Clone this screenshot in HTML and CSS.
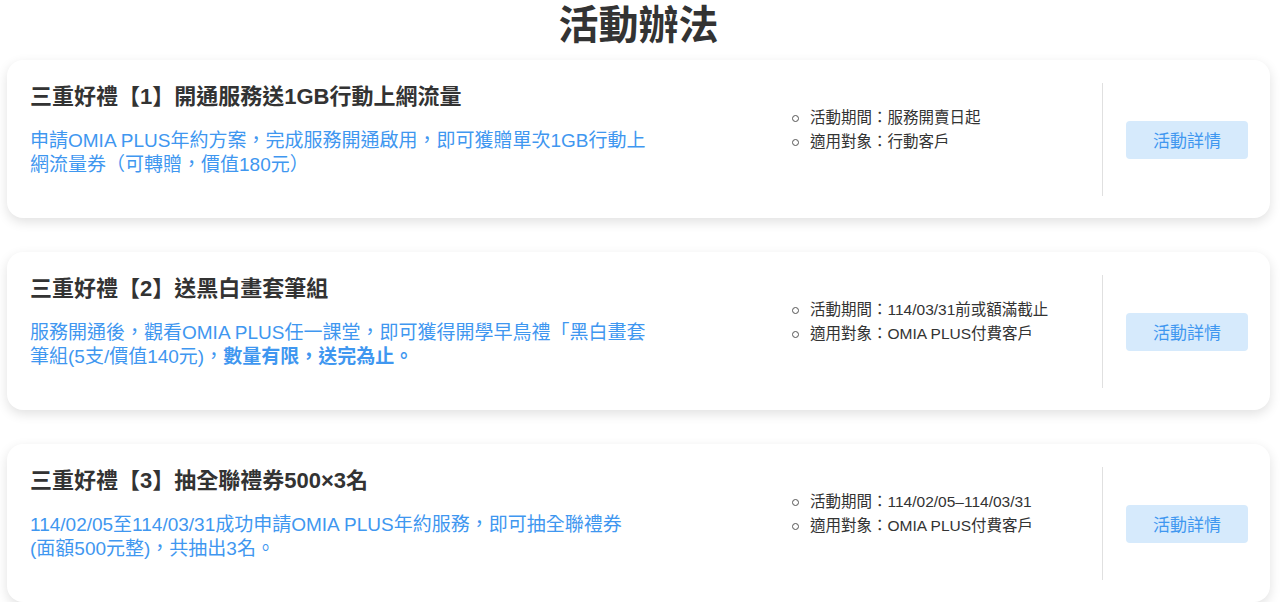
FILE: index.html
```html
<!DOCTYPE html>
<html lang="zh-Hant">
<head>
    <meta charset="UTF-8">
    <title>活動辦法</title>
    <link rel="stylesheet" href="styles.css">
</head>
<body>
    <div class="container">
        <h1>活動辦法</h1>
        <div class="cards">
            <div class="card">
                <div class="info">
                    <h2>三重好禮【1】開通服務送1GB行動上網流量</h2>
                    <p class="desc">申請OMIA PLUS年約方案，完成服務開通啟用，即可獲贈單次1GB行動上<br>網流量券（可轉贈，價值180元）</p>
                </div>
                <ul class="meta">
                    <li>活動期間：服務開賣日起</li>
                    <li>適用對象：行動客戶</li>
                </ul>
                <div class="divider"></div>
                <div class="action">
                    <button>活動詳情</button>
                </div>
            </div>
            <div class="card">
                <div class="info">
                    <h2>三重好禮【2】送黑白畫套筆組</h2>
                    <p class="desc">服務開通後，觀看OMIA PLUS任一課堂，即可獲得開學早鳥禮「黑白畫套<br>筆組(5支/價值140元)，<strong>數量有限，送完為止。</strong></p>
                </div>
                <ul class="meta">
                    <li>活動期間：114/03/31前或額滿截止</li>
                    <li>適用對象：OMIA PLUS付費客戶</li>
                </ul>
                <div class="divider"></div>
                <div class="action">
                    <button>活動詳情</button>
                </div>
            </div>
            <div class="card">
                <div class="info">
                    <h2>三重好禮【3】抽全聯禮券500×3名</h2>
                    <p class="desc">114/02/05至114/03/31成功申請OMIA PLUS年約服務，即可抽全聯禮券<br>(面額500元整)，共抽出3名。</p>
                </div>
                <ul class="meta">
                    <li>活動期間：114/02/05–114/03/31</li>
                    <li>適用對象：OMIA PLUS付費客戶</li>
                </ul>
                <div class="divider"></div>
                <div class="action">
                    <button>活動詳情</button>
                </div>
            </div>
        </div>
    </div>
</body>
</html>
```

FILE: styles.css
```css
body {
    font-family: "Liberation Sans", "Noto Sans CJK TC", sans-serif;
    background-color: #ffffff;
    color: #333333;
    margin: 0;
    padding: 0;
}

.container {
    padding: 0 10px 0 7px;
}

h1 {
    margin: 0 0 10px;
    font-size: 40px;
    line-height: 50px;
    font-weight: 700;
    text-align: center;
    color: #333333;
}

.cards {
    display: flex;
    flex-direction: column;
    gap: 34px;
}

.card {
    display: flex;
    align-items: center;
    height: 158px;
    box-sizing: border-box;
    padding: 23px 22px 22px 23px;
    background-color: #fff;
    border-radius: 16px;
    box-shadow: 0 4px 12px rgba(0, 0, 0, 0.12);
}

.info {
    flex: 1;
    margin-bottom: 21px;
}

.info h2 {
    margin: 0;
    font-size: 22px;
    line-height: 30px;
    font-weight: 700;
    color: #333333;
}

.desc {
    margin: 17px 0 0;
    font-size: 19px;
    line-height: 24px;
    white-space: nowrap;
    color: #3f97f0;
}

.desc strong {
    font-weight: 700;
}

.meta {
    width: 317px;
    box-sizing: border-box;
    list-style: none;
    margin: 0 0 20px;
    padding: 0 0 0 25px;
    font-size: 15.5px;
    line-height: 24px;
}

.meta li {
    position: relative;
}

.meta li::before {
    content: "";
    position: absolute;
    left: -18px;
    top: 9px;
    width: 5px;
    height: 5px;
    border: 1px solid #555;
    border-radius: 50%;
}

.divider {
    align-self: stretch;
    width: 1px;
    background-color: #e0e0e0;
}

.action {
    padding-left: 23px;
}

button {
    width: 122px;
    height: 38px;
    border: none;
    border-radius: 4px;
    background-color: #d6eafc;
    color: #3f97f0;
    font-family: "Liberation Sans", "Noto Sans CJK TC", sans-serif;
    font-size: 17px;
    cursor: pointer;
}
```
